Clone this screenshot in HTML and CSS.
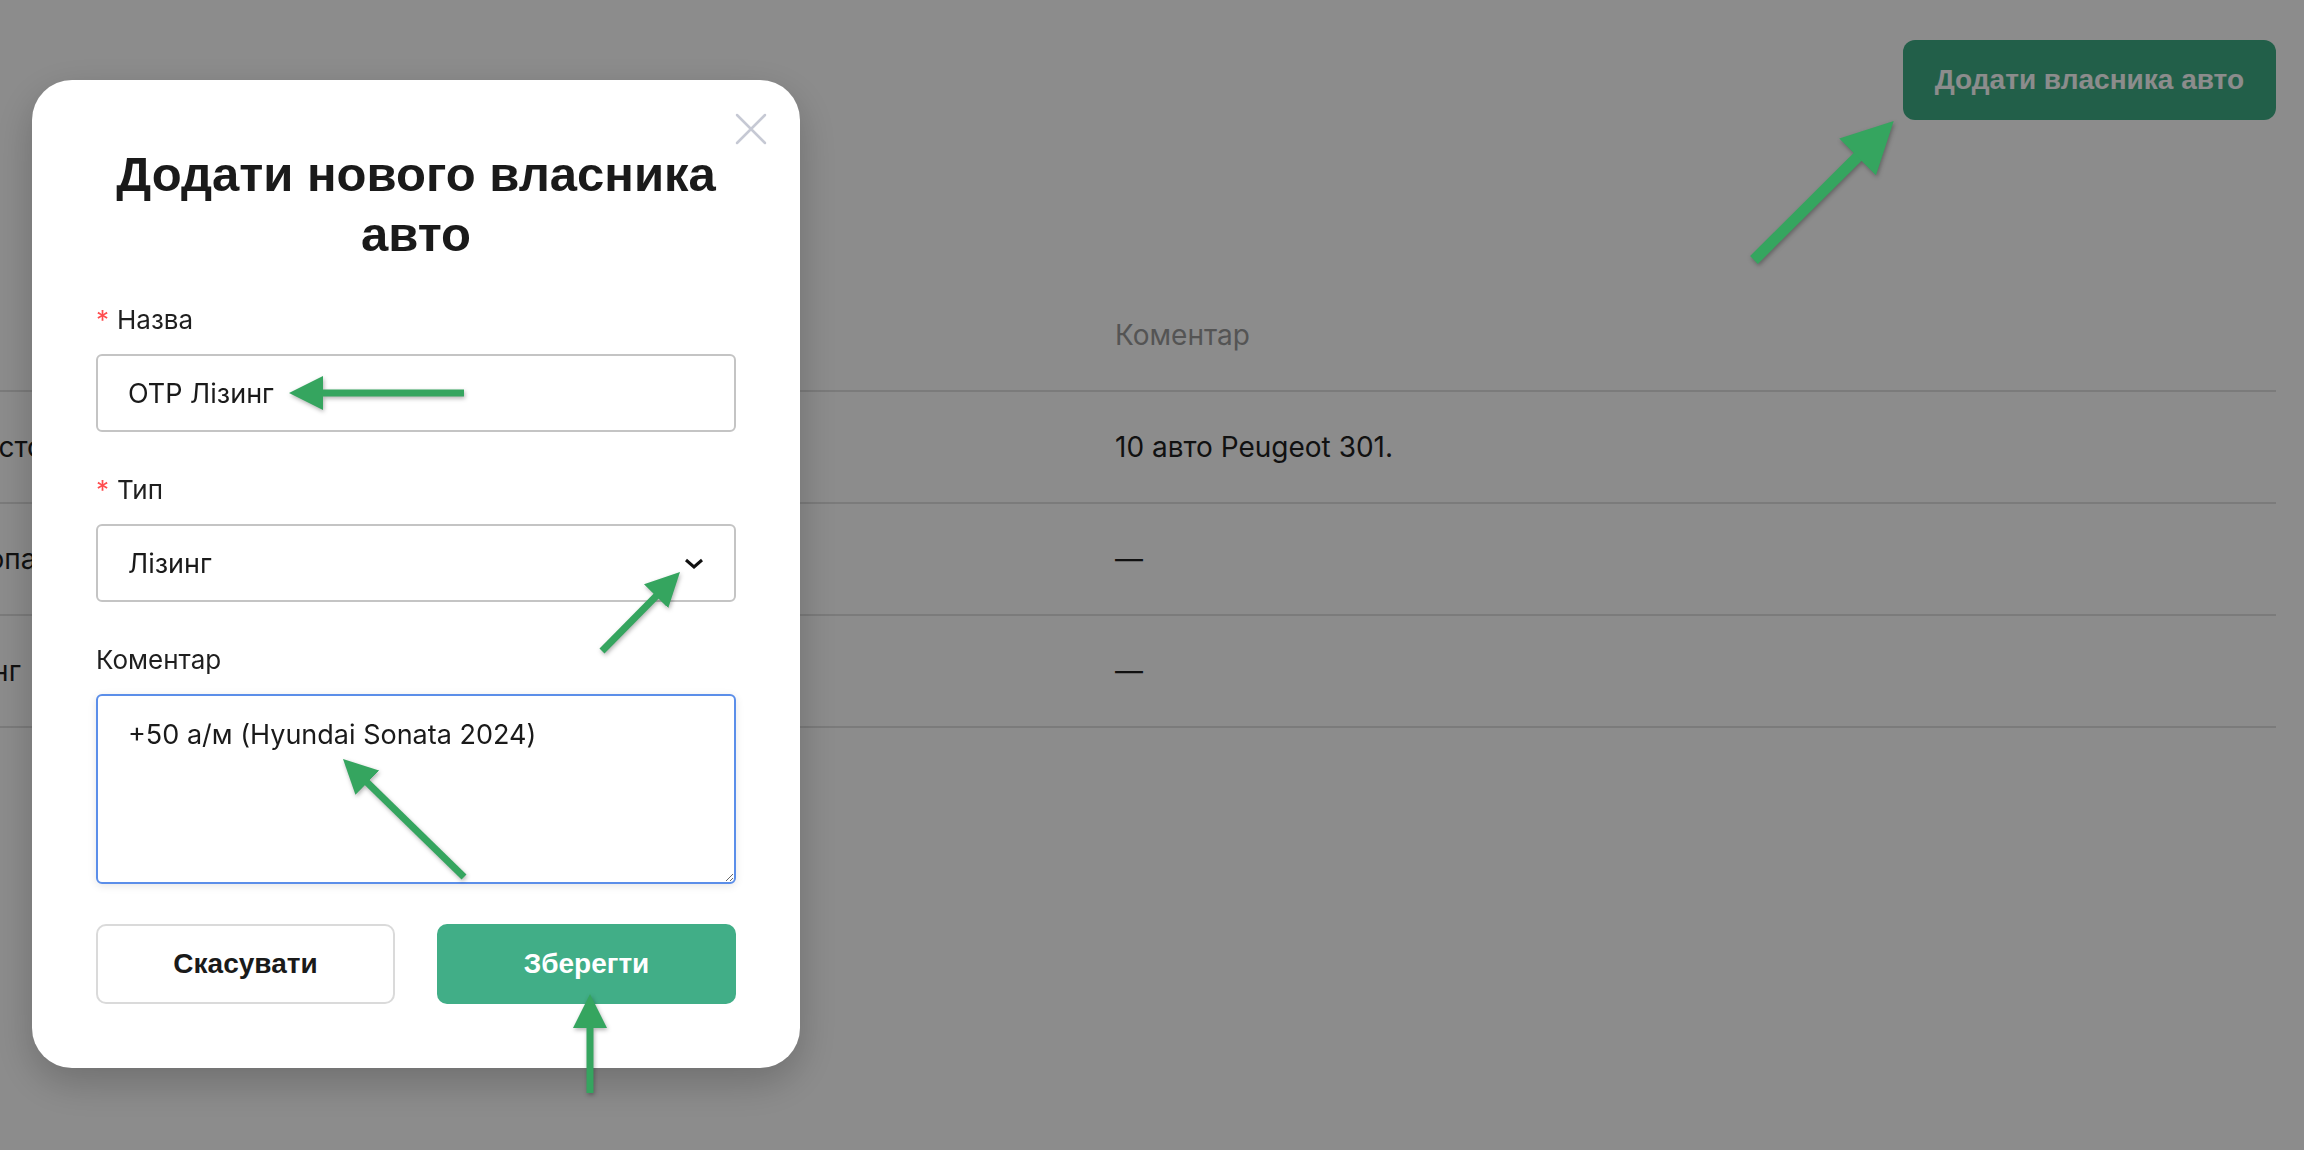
FILE: index.html
```html
<!DOCTYPE html>
<html lang="uk">
<head>
    <meta charset="UTF-8">
    <meta name="viewport" content="width=device-width, initial-scale=1.0">
    <title>Власники авто</title>
    <link rel="stylesheet" href="styles.css">
</head>
<body>
    <div class="page">
        <div class="toolbar">
            <button class="add-btn">Додати власника авто</button>
        </div>

        <table class="owners-table">
            <colgroup>
                <col class="col-type">
                <col class="col-name">
                <col>
            </colgroup>
            <thead>
                <tr>
                    <th>Тип</th>
                    <th>Назва</th>
                    <th>Коментар</th>
                </tr>
            </thead>
            <tbody>
                <tr>
                    <td>Автостоянка</td>
                    <td>Автопарк</td>
                    <td>10 авто Peugeot 301.</td>
                </tr>
                <tr>
                    <td>Європа</td>
                    <td>Прокат</td>
                    <td>—</td>
                </tr>
                <tr>
                    <td>Лізинг</td>
                    <td>Лізинг</td>
                    <td>—</td>
                </tr>
            </tbody>
        </table>
    </div>

    <div class="overlay">
        <div class="modal">
            <button class="modal-close" aria-label="Закрити">
                <svg width="32" height="32" viewBox="0 0 32 32">
                    <path d="M2 2 L30 30 M30 2 L2 30" stroke="#c6c9d4" stroke-width="2.5" stroke-linecap="round" fill="none"/>
                </svg>
            </button>

            <h2 class="modal-title">Додати нового власника авто</h2>

            <div class="field">
                <label><span class="required">*</span>Назва</label>
                <input type="text" class="control" value="ОТР Лізинг">
            </div>

            <div class="field">
                <label><span class="required">*</span>Тип</label>
                <div class="select-wrap">
                    <select class="control">
                        <option>Лізинг</option>
                        <option>Автопарк</option>
                        <option>Прокат</option>
                    </select>
                    <svg class="chevron" width="20" height="11" viewBox="0 0 20 11">
                        <path d="M2 2 L10 9 L18 2" stroke="#111" stroke-width="3" fill="none"/>
                    </svg>
                </div>
            </div>

            <div class="field">
                <label>Коментар</label>
                <textarea class="control comment">+50 а/м (Hyundai Sonata 2024)</textarea>
            </div>

            <div class="modal-actions">
                <button class="btn-cancel">Скасувати</button>
                <button class="btn-save">Зберегти</button>
            </div>
        </div>
    </div>

    <!-- annotation arrows drawn over the screenshot -->
    <svg class="arrows" width="2304" height="1150" viewBox="0 0 2304 1150">
        <defs>
            <marker id="headBig" markerUnits="userSpaceOnUse" markerWidth="51" markerHeight="52" refX="2" refY="26" orient="auto">
                <path d="M0 0 L51 26 L0 52 Z" fill="#35a55f"/>
            </marker>
            <marker id="head" markerUnits="userSpaceOnUse" markerWidth="34" markerHeight="34" refX="2" refY="17" orient="auto">
                <path d="M0 0 L34 17 L0 34 Z" fill="#35a55f"/>
            </marker>
        </defs>
        <g stroke="#35a55f">
            <line x1="1754" y1="260" x2="1859" y2="155.5" stroke-width="11" marker-end="url(#headBig)"/>
            <line x1="464" y1="393" x2="321" y2="393" stroke-width="7" marker-end="url(#head)"/>
            <line x1="602" y1="651" x2="657.5" y2="594.8" stroke-width="7" marker-end="url(#head)"/>
            <line x1="464" y1="877" x2="365.9" y2="781.3" stroke-width="7" marker-end="url(#head)"/>
            <line x1="590" y1="1093" x2="590" y2="1026" stroke-width="7" marker-end="url(#head)"/>
        </g>
    </svg>
</body>
</html>
```

FILE: styles.css
```css
html, body {
    margin: 0;
    overflow: hidden;
}

body {
    font-family: Inter, "Noto Sans", sans-serif;
    color: #1f1f1f;
    background: #fff;
}

.page {
    padding: 40px 28px 0 0;
}

.toolbar {
    display: flex;
    justify-content: flex-end;
}

.add-btn {
    height: 80px;
    padding: 0 32px;
    font: 700 28px "Liberation Sans", Arial, sans-serif;
    color: #fff;
    background-color: #3fae86;
    border: none;
    border-radius: 12px;
}

.owners-table {
    margin-top: 160px;
    margin-left: -98px;
    width: calc(100% + 98px);
    border-collapse: collapse;
    table-layout: fixed;
}

.col-type {
    width: 603px;
}

.col-name {
    width: 578px;
}

.owners-table th,
.owners-table td {
    height: 110px;
    padding: 0 32px;
    text-align: left;
    font-size: 28px;
    white-space: nowrap;
    overflow: hidden;
}

.owners-table th {
    font-weight: 400;
    color: #9a9a9a;
    border-bottom: 2px solid #e0e0e0;
}

.owners-table td {
    color: #1f1f1f;
    border-bottom: 2px solid #e0e0e0;
}

.overlay {
    position: fixed;
    inset: 0;
    background: rgba(0, 0, 0, 0.45);
}

.modal {
    position: absolute;
    left: 32px;
    top: 80px;
    width: 768px;
    box-sizing: border-box;
    padding: 64px 64px 64px;
    background: #fff;
    border-radius: 40px;
    box-shadow: 0 14px 40px rgba(0, 0, 0, 0.22);
}

.modal-close {
    position: absolute;
    top: 33px;
    right: 33px;
    width: 32px;
    height: 32px;
    padding: 0;
    border: none;
    background: none;
}

.modal-close svg {
    display: block;
}

.modal-title {
    margin: 0;
    font: 700 49px/60px "Liberation Sans", Arial, sans-serif;
    text-align: center;
    color: #1a1a1a;
}

.field {
    margin-top: 40px;
}

.field + .field {
    margin-top: 42px;
}

.field label {
    display: block;
    margin-bottom: 18px;
    font-size: 26px;
    line-height: 32px;
    color: #1f1f1f;
}

.required {
    color: #ff4d4f;
    margin-right: 8px;
}

.control {
    display: block;
    width: 100%;
    height: 78px;
    box-sizing: border-box;
    padding: 0 30px;
    font-family: Inter, "Noto Sans", sans-serif;
    font-size: 27px;
    color: #1a1a1a;
    background: #fff;
    border: 2px solid #c4c4c4;
    border-radius: 6px;
    outline: none;
}

.select-wrap {
    position: relative;
}

.select-wrap select {
    appearance: none;
    -webkit-appearance: none;
}

.chevron {
    position: absolute;
    right: 32px;
    top: 34px;
}

.comment {
    height: 190px;
    padding: 23px 30px;
    line-height: 32px;
    border-color: #5b8ee9;
    box-shadow: 0 2px 8px rgba(0, 0, 0, 0.1);
}

.modal-actions {
    display: grid;
    grid-template-columns: 1fr 1fr;
    gap: 42px;
    margin-top: 40px;
}

.modal-actions button {
    height: 80px;
    font: 700 28px "Liberation Sans", Arial, sans-serif;
    border-radius: 10px;
}

.btn-cancel {
    color: #1a1a1a;
    background: #fff;
    border: 2px solid #dadada;
}

.btn-save {
    color: #fff;
    background: #41ae87;
    border: none;
}

.arrows {
    position: absolute;
    top: 0;
    left: 0;
    pointer-events: none;
    filter: drop-shadow(1px 2px 2px rgba(0, 0, 0, 0.3));
}
```
